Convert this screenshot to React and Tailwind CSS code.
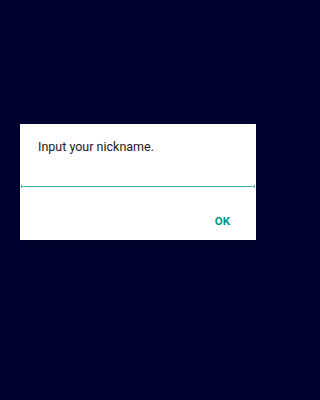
import React from "react";

const App = () => {
  return (
    <div className="w-full h-[400px] bg-[#020230] pt-[124px] pl-[20px] font-['Roboto',sans-serif]">
      <div className="w-[236px] h-[116px] bg-white flex flex-col shadow-lg">
        <p className="pl-[18px] pt-[13px] text-[12.5px] leading-[20px] text-[#212121]">
          Input your nickname.
        </p>
        <div className="mt-[28px] mx-[1px] relative h-[3px]">
          <div className="absolute left-0 right-0 top-[1px] h-[1px] bg-[#4db6ac]"></div>
          <div className="absolute left-0 top-0 w-[1px] h-[3px] bg-[#4db6ac]"></div>
          <div className="absolute right-0 top-0 w-[1px] h-[3px] bg-[#4db6ac]"></div>
        </div>
        <div className="flex justify-end pr-[26px] pt-[25px]">
          <span className="text-[11.5px] font-bold leading-[16px] text-[#009688]">OK</span>
        </div>
      </div>
    </div>
  );
};

export default App;
